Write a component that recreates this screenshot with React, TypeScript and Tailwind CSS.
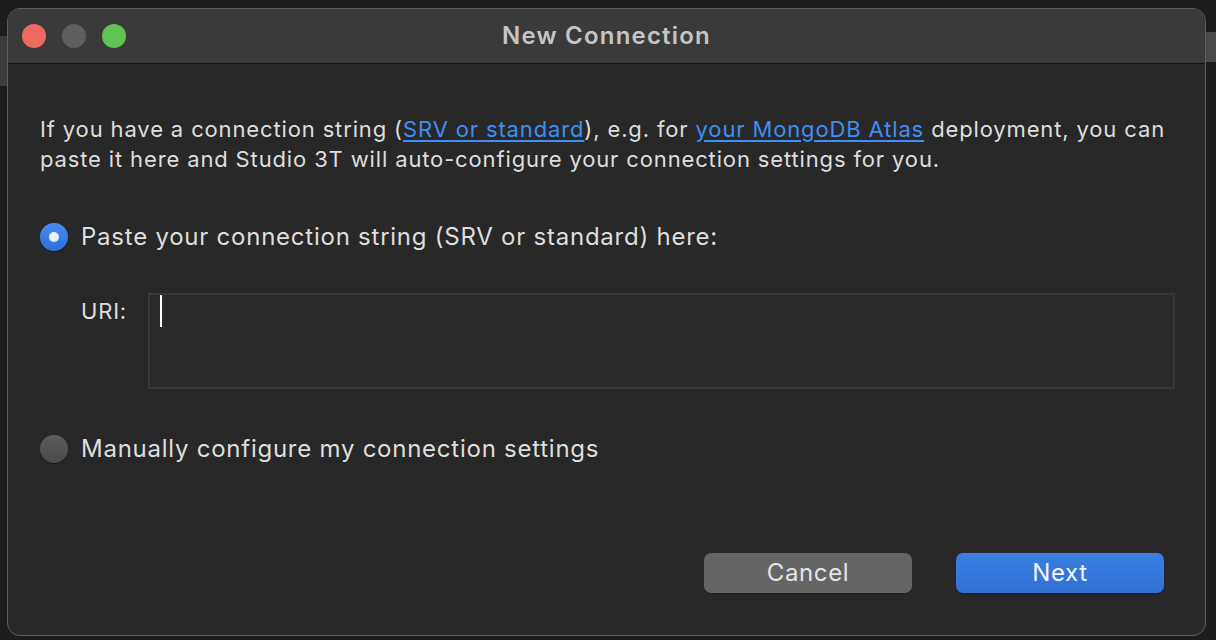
export default function App() {
  return (
    <div
      className="w-[1216px] h-[640px] bg-[#1c1c1c] relative overflow-hidden pt-[8px] pl-[7px]"
      style={{ fontFamily: 'Inter, "Noto Sans", sans-serif' }}
    >
      {/* Bits of the window behind */}
      <div className="absolute left-0 top-[36px] w-[8px] h-[50px] bg-[#3c3c3c]" />
      <div className="absolute right-0 top-[32px] w-[10px] h-[30px] bg-[#4a4a4a]" />

      {/* Dialog window */}
      <div className="relative w-[1199px] h-[628px] rounded-[13px] border border-[#5e5e5e] bg-[#282828] overflow-hidden flex flex-col">
        {/* Title bar */}
        <div className="h-[55px] shrink-0 bg-[#3a3a3a] border-b border-[#141414] flex items-center relative">
          <div className="flex items-center gap-[16px] pl-[14px]">
            <span className="w-[24px] h-[24px] rounded-full bg-[#ee6a5f]" />
            <span className="w-[24px] h-[24px] rounded-full bg-[#5f5f5f]" />
            <span className="w-[24px] h-[24px] rounded-full bg-[#5fc454]" />
          </div>
          <div className="absolute inset-0 flex items-center justify-center text-[24px] font-semibold tracking-[1.2px] text-[#c4c4c4] pointer-events-none">
            New Connection
          </div>
        </div>

        {/* Body */}
        <div className="flex-1 flex flex-col pl-[32px] pr-[30px] text-[#dedede]">
          <p className="mt-[50px] text-[22px] leading-[30px] tracking-[0.86px] whitespace-nowrap">
            If you have a connection string (
            <a className="text-[#3f8ef5] underline underline-offset-[3px]">SRV or standard</a>
            ), e.g. for{' '}
            <a className="text-[#3f8ef5] underline underline-offset-[3px]">your MongoDB Atlas</a>{' '}
            deployment, you can
            <br />
            paste it here and Studio 3T will auto-configure your connection settings for you.
          </p>

          {/* Paste radio */}
          <div className="mt-[48px] h-[30px] flex items-center gap-[13px]">
            <span className="w-[28px] h-[28px] rounded-full bg-gradient-to-b from-[#4a8cf0] to-[#2f6fd6] flex items-center justify-center shadow-[0_1px_1px_rgba(0,0,0,0.4)]">
              <span className="w-[10px] h-[10px] rounded-full bg-[#e8f0fc]" />
            </span>
            <span className="text-[24px] tracking-[0.76px]">Paste your connection string (SRV or standard) here:</span>
          </div>

          {/* URI row */}
          <div className="mt-[41px] flex items-start">
            <span className="w-[108px] shrink-0 pl-[41px] pt-[3px] text-[22px] leading-[30px] tracking-[0.8px]">URI:</span>
            <div className="flex-1 h-[96px] border-2 border-[#383838] bg-[#2a2a2a] relative">
              <span className="absolute left-[10px] top-[0px] w-[2px] h-[32px] bg-white" />
            </div>
          </div>

          {/* Manual radio */}
          <div className="mt-[45px] h-[30px] flex items-center gap-[13px]">
            <span className="w-[28px] h-[28px] rounded-full bg-gradient-to-b from-[#5c5c5c] to-[#4a4a4a] shadow-[0_1px_1px_rgba(0,0,0,0.4)]" />
            <span className="text-[24px] tracking-[0.75px]">Manually configure my connection settings</span>
          </div>

          {/* Buttons */}
          <div className="mt-[89px] mr-[11px] flex justify-end gap-[44px]">
            <button className="w-[208px] h-[40px] rounded-[7px] bg-[#656565] text-[24px] tracking-[0.6px] text-[#e4e4e4] shadow-[0_1px_1px_rgba(0,0,0,0.3)]">
              Cancel
            </button>
            <button className="w-[208px] h-[40px] rounded-[7px] bg-gradient-to-b from-[#3b80e4] to-[#306fd2] text-[24px] tracking-[0.6px] text-[#f2f6fc] shadow-[0_1px_1px_rgba(0,0,0,0.3)]">
              Next
            </button>
          </div>
        </div>
      </div>
    </div>
  );
}
